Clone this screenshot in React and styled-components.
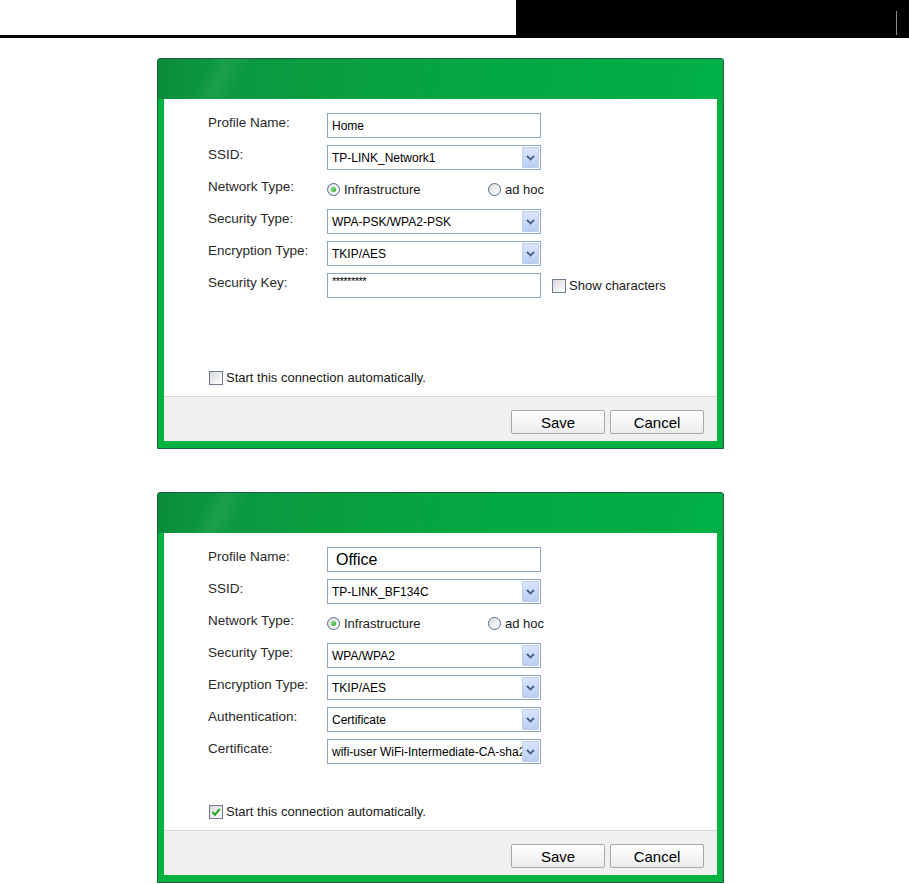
import React from 'react';
import styled, { createGlobalStyle } from 'styled-components';

const GlobalStyle = createGlobalStyle`
    html, body {
        margin: 0;
        padding: 0;
        background: #ffffff;
        font-family: "Liberation Sans", Arial, sans-serif;
    }
`;

const TopBar = styled.header`
    display: flex;
    height: 38px;
`;

const TopLeft = styled.div`
    flex: 0 0 516px;
    border-bottom: 3px solid #000;
`;

const TopRight = styled.div`
    flex: 1;
    background: #000;
    display: flex;
    justify-content: flex-end;
    padding: 11px 12px 3px 0;
`;

const TopDivider = styled.div`
    width: 1px;
    background: #8a8a8a;
`;

const Page = styled.main`
    display: flex;
    flex-direction: column;
    gap: 43px;
    padding: 20px 0 0 157px;
`;

const Dialog = styled.section`
    width: 565px;
    border: 1px solid #1f5e41;
    border-radius: 3px 3px 0 0;
    background: #00b23f;
    display: flex;
    flex-direction: column;
`;

const Header = styled.div`
    height: 40px;
    border-radius: 2px 2px 0 0;
    background:
        linear-gradient(115deg, transparent 0%, transparent 9%, rgba(255,255,255,0.07) 12%, transparent 16%, transparent 100%),
        linear-gradient(100deg, #0b8c3b 0%, #0b973f 10%, #099e40 30%, #03a843 60%, #00b046 100%);
`;

const Body = styled.div`
    margin: 0 6px 7px 6px;
    background: #ffffff;
    display: flex;
    flex-direction: column;
`;

const Form = styled.div`
    height: 297px;
    box-sizing: border-box;
    padding: 14px 0 0 44px;
    display: flex;
    flex-direction: column;
    gap: 7px;
`;

const Row = styled.div`
    display: flex;
    align-items: center;
    height: 25px;
`;

const Label = styled.div`
    width: 119px;
    align-self: flex-start;
    padding-top: 2px;
    font-size: 13.5px;
    line-height: 15px;
    color: #2a2a2a;
`;

const TextBox = styled.div`
    position: relative;
    box-sizing: border-box;
    width: 214px;
    height: 25px;
    border: 1px solid #8fa6c3;
    background: #fff;
    padding: 0 ${p => (p.$select ? '22px' : '4px')} 0 ${p => (p.$large ? '8px' : '4px')};
    display: flex;
    align-items: ${p => (p.$masked ? 'flex-start' : 'center')};
    font-size: ${p => (p.$large ? '16px' : '12px')};
    color: #000;
    white-space: nowrap;
    overflow: hidden;
`;

const DropButton = styled.span`
    position: absolute;
    top: 1px;
    right: 1px;
    bottom: 1px;
    width: 17px;
    box-sizing: border-box;
    border: 1px solid #bccdf0;
    border-radius: 1px;
    background: linear-gradient(#dbe6fb, #b9cdf5);
    display: flex;
    align-items: center;
    justify-content: center;
`;

const Masked = styled.span`
    font-size: 11px;
    line-height: 14px;
    letter-spacing: -0.5px;
`;

const RadioGroup = styled.div`
    display: grid;
    grid-template-columns: 161px auto;
    align-items: center;
`;

const Option = styled.label`
    display: flex;
    align-items: center;
    gap: 4px;
    font-size: 13px;
    color: #1a1a1a;
`;

const RadioCircle = styled.span`
    box-sizing: border-box;
    width: 13px;
    height: 13px;
    border-radius: 50%;
    border: 1px solid #4c6c92;
    background: linear-gradient(135deg, #dcdcdc, #ffffff);
    display: flex;
    align-items: center;
    justify-content: center;
    &::after {
        content: '';
        display: ${p => (p.$checked ? 'block' : 'none')};
        width: 5px;
        height: 5px;
        border-radius: 50%;
        background: radial-gradient(circle at 35% 35%, #7ee07e, #1c9a1c);
    }
`;

const CheckBox = styled.span`
    box-sizing: border-box;
    width: 14px;
    height: 14px;
    border: 1px solid #6d7b8c;
    background: linear-gradient(135deg, #d8d8d8, #ffffff);
    display: flex;
    align-items: center;
    justify-content: center;
    flex: none;
`;

const ShowChars = styled(Option)`
    margin-left: 11px;
    gap: 3px;
`;

const AutoStart = styled(Option)`
    margin-top: auto;
    margin-bottom: 11px;
    margin-left: 1px;
    gap: 3px;
`;

const Footer = styled.div`
    height: 45px;
    box-sizing: border-box;
    background: #f0f0f0;
    border-top: 1px solid #d6d6d6;
    padding: 13px 13px 0 0;
    display: flex;
    justify-content: flex-end;
    align-items: flex-start;
    gap: 5px;
`;

const Button = styled.button`
    width: 94px;
    height: 24px;
    border: 1px solid #a8a8a8;
    border-radius: 2px;
    background: linear-gradient(#ffffff, #ececec);
    font-family: "Liberation Sans", Arial, sans-serif;
    font-size: 15px;
    color: #000;
    padding: 0;
`;

const Chevron = () => (
    <svg width="9" height="6" viewBox="0 0 9 6">
        <path d="M1 1 L4.5 4.5 L8 1" fill="none" stroke="#4a5f86" strokeWidth="1.8" />
    </svg>
);

const Tick = () => (
    <svg width="10" height="10" viewBox="0 0 10 10">
        <path d="M1.5 5 L4 7.8 L8.8 1.8" fill="none" stroke="#1fa81f" strokeWidth="2" />
    </svg>
);

const Select = ({ value }) => (
    <TextBox $select>
        {value}
        <DropButton><Chevron /></DropButton>
    </TextBox>
);

const Radio = ({ checked, children }) => (
    <Option>
        <RadioCircle $checked={checked} />
        {children}
    </Option>
);

const NetworkRow = () => (
    <Row>
        <Label>Network Type:</Label>
        <RadioGroup>
            <Radio checked>Infrastructure</Radio>
            <Radio>ad hoc</Radio>
        </RadioGroup>
    </Row>
);

const ProfileDialog = ({ autoStart, children }) => (
    <Dialog>
        <Header />
        <Body>
            <Form>
                {children}
                <AutoStart>
                    <CheckBox>{autoStart && <Tick />}</CheckBox>
                    Start this connection automatically.
                </AutoStart>
            </Form>
            <Footer>
                <Button>Save</Button>
                <Button>Cancel</Button>
            </Footer>
        </Body>
    </Dialog>
);

export default function App() {
    return (
        <>
            <GlobalStyle />
            <TopBar>
                <TopLeft />
                <TopRight><TopDivider /></TopRight>
            </TopBar>
            <Page>
                <ProfileDialog>
                    <Row><Label>Profile Name:</Label><TextBox>Home</TextBox></Row>
                    <Row><Label>SSID:</Label><Select value="TP-LINK_Network1" /></Row>
                    <NetworkRow />
                    <Row><Label>Security Type:</Label><Select value="WPA-PSK/WPA2-PSK" /></Row>
                    <Row><Label>Encryption Type:</Label><Select value="TKIP/AES" /></Row>
                    <Row>
                        <Label>Security Key:</Label>
                        <TextBox $masked><Masked>*********</Masked></TextBox>
                        <ShowChars><CheckBox />Show characters</ShowChars>
                    </Row>
                </ProfileDialog>
                <ProfileDialog autoStart>
                    <Row><Label>Profile Name:</Label><TextBox $large>Office</TextBox></Row>
                    <Row><Label>SSID:</Label><Select value="TP-LINK_BF134C" /></Row>
                    <NetworkRow />
                    <Row><Label>Security Type:</Label><Select value="WPA/WPA2" /></Row>
                    <Row><Label>Encryption Type:</Label><Select value="TKIP/AES" /></Row>
                    <Row><Label>Authentication:</Label><Select value="Certificate" /></Row>
                    <Row><Label>Certificate:</Label><Select value="wifi-user  WiFi-Intermediate-CA-sha2" /></Row>
                </ProfileDialog>
            </Page>
        </>
    );
}
